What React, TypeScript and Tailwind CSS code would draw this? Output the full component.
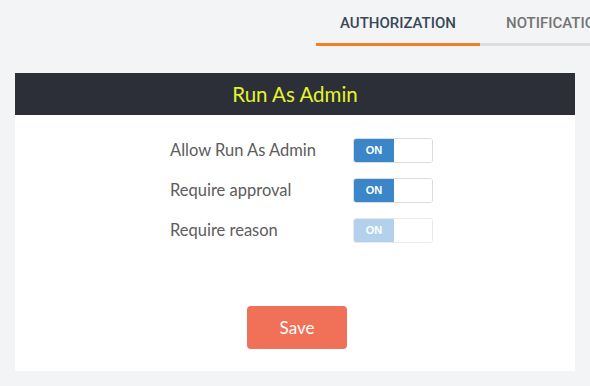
import React from "react";

function Toggle({ faded }: { faded?: boolean }) {
  return (
    <div
      className={
        "flex h-[25px] w-[80px] overflow-hidden rounded-[3px] border " +
        (faded ? "border-[#e6e9ee]" : "border-[#d9dde3]")
      }
    >
      <div
        className={
          "flex w-[40px] items-center justify-center text-[11px] font-bold text-white " +
          (faded ? "bg-[#b3d1ec]" : "bg-[#3b86c8]")
        }
        style={{ fontFamily: "'Liberation Sans', Arial, sans-serif" }}
      >
        ON
      </div>
      <div className="flex-1 bg-white" />
    </div>
  );
}

export default function App() {
  const rows = [
    { label: "Allow Run As Admin", faded: false },
    { label: "Require approval", faded: false },
    { label: "Require reason", faded: true },
  ];
  return (
    <div
      className="h-[386px] w-[590px] overflow-hidden bg-[#f3f4f6]"
      style={{ fontFamily: "Lato, 'Open Sans', sans-serif" }}
    >
      <div className="flex h-[46px] pl-[316px]">
        <div
          className="flex w-[164px] shrink-0 items-center justify-center border-b-[3px] border-[#f28022] pt-[3px] text-[15px] font-medium text-[#3b4756]"
          style={{ fontFamily: "Roboto, sans-serif" }}
        >
          AUTHORIZATION
        </div>
        <div
          className="flex shrink-0 items-center whitespace-nowrap border-b-[3px] border-[#dedede] pl-[26px] pr-[26px] pt-[3px] text-[15px] font-medium text-[#737373]"
          style={{ fontFamily: "Roboto, sans-serif" }}
        >
          NOTIFICATIONS
        </div>
      </div>
      <div className="mx-[15px] mt-[27px] h-[298px] bg-white">
        <div className="flex h-[42px] items-center justify-center bg-[#2c2f38] text-[20.5px] text-[#e4f42c]">
          Run As Admin
        </div>
        <div className="flex flex-col gap-[15px] pl-[155px] pt-[23px]">
          {rows.map((r) => (
            <div key={r.label} className="flex items-center">
              <div className="w-[183px] text-[16.5px] text-[#5c5c5c]">{r.label}</div>
              <Toggle faded={r.faded} />
            </div>
          ))}
        </div>
        <div className="mt-[63px] flex justify-center pl-[4px]">
          <button className="h-[43px] w-[100px] rounded-[4px] bg-[#f07058] text-[17px] text-white">
            Save
          </button>
        </div>
      </div>
    </div>
  );
}
